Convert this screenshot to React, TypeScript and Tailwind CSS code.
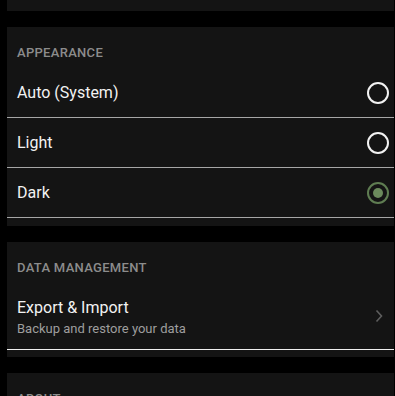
import React from "react";

type Theme = "auto" | "light" | "dark";

function Radio({ checked }: { checked: boolean }) {
  return (
    <span
      className={`flex h-[22px] w-[22px] items-center justify-center rounded-full border-2 ${
        checked ? "border-[#5f7d52]" : "border-[#f2f2f2]"
      }`}
    >
      {checked && <span className="h-[10px] w-[10px] rounded-full bg-[#6b8a5c]" />}
    </span>
  );
}

function SectionHeader({ title }: { title: string }) {
  return (
    <div className="px-[10px] pt-[18px] pb-[7px] text-[13px] leading-[16px] font-medium tracking-[0.3px] text-[#8c8c8c]">
      {title}
    </div>
  );
}

export default function App() {
  const theme: Theme = "dark";
  const options: { id: Theme; label: string }[] = [
    { id: "auto", label: "Auto (System)" },
    { id: "light", label: "Light" },
    { id: "dark", label: "Dark" },
  ];

  return (
    <div
      className="h-[396px] w-[395px] overflow-hidden bg-black pr-[1px] pl-[7px]"
      style={{ fontFamily: "Roboto, 'Noto Sans', sans-serif" }}
    >
      <div className="mt-[-20px] flex flex-col gap-[16px]">
        <div className="h-[31px] bg-[#141414]" />

        <div className="bg-[#141414] pb-[8px]">
          <SectionHeader title="APPEARANCE" />
          {options.map((o) => (
            <div
              key={o.id}
              className="flex h-[50px] items-center justify-between border-b-[1.5px] border-[#a6a6a6] pr-[5px] pl-[10px]"
            >
              <span className="text-[16px] text-[#f2f2f2]">{o.label}</span>
              <Radio checked={o.id === theme} />
            </div>
          ))}
        </div>

        <div className="bg-[#141414] pb-[7px]">
          <SectionHeader title="DATA MANAGEMENT" />
          <div className="flex h-[67px] items-center justify-between border-b border-[#f0f0f0] pr-[11px] pl-[10px]">
            <div className="flex flex-col pt-[2px]">
              <span className="text-[16px] leading-[22px] text-[#f2f2f2]">Export &amp; Import</span>
              <span className="mt-[1px] text-[13px] leading-[18px] text-[#9e9e9e]">
                Backup and restore your data
              </span>
            </div>
            <svg width="8" height="14" viewBox="0 0 8 14" fill="none">
              <path d="M1.5 1.5l5 5.5-5 5.5" stroke="#5e5e5e" strokeWidth="1.6" />
            </svg>
          </div>
        </div>

        <div className="bg-[#141414] pb-[8px]">
          <SectionHeader title="ABOUT" />
        </div>
      </div>
    </div>
  );
}
